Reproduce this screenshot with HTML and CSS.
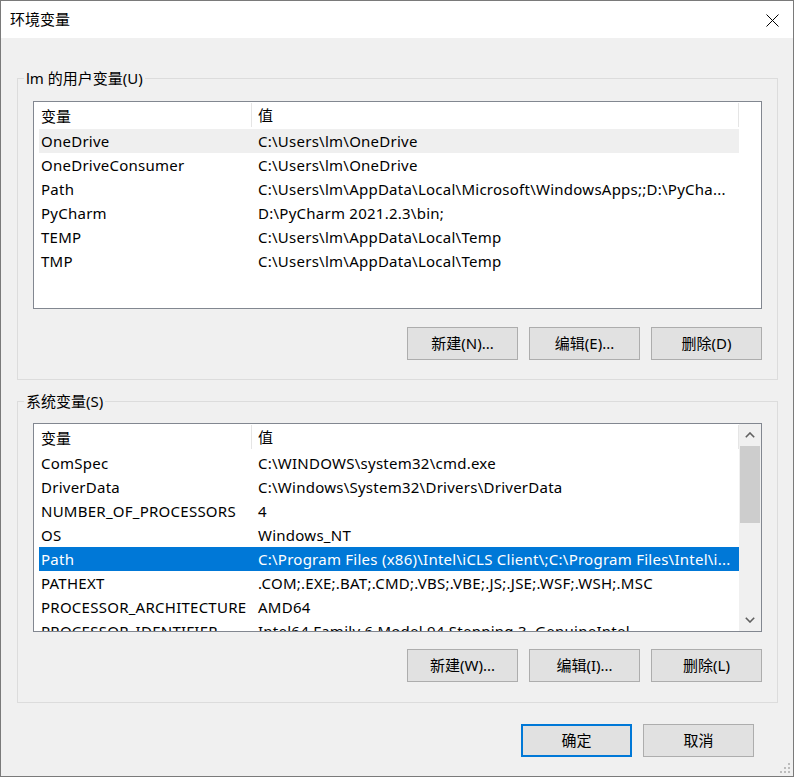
FILE: index.html
```html
<!DOCTYPE html>
<html lang="zh-CN">
<head>
<meta charset="utf-8">
<title>环境变量</title>
<link rel="stylesheet" href="styles.css">
</head>
<body>
<div class="window">
  <div class="titlebar">
    <span class="title">环境变量</span>
    <span class="close">
      <svg width="13" height="13" viewBox="0 0 13 13"><path d="M0.5 0.5 L12.5 12.5 M12.5 0.5 L0.5 12.5" stroke="#000" stroke-width="1" fill="none"/></svg>
    </span>
  </div>
  <div class="content">
    <fieldset class="group g1">
      <legend>lm 的用户变量(U)</legend>
      <div class="list">
        <div class="list-main">
          <div class="row head"><div class="c1">变量</div><div class="c2">值</div></div>
          <div class="row hover"><div class="c1">OneDrive</div><div class="c2">C:\Users\lm\OneDrive</div></div>
          <div class="row"><div class="c1">OneDriveConsumer</div><div class="c2">C:\Users\lm\OneDrive</div></div>
          <div class="row"><div class="c1">Path</div><div class="c2">C:\Users\lm\AppData\Local\Microsoft\WindowsApps;;D:\PyCha...</div></div>
          <div class="row"><div class="c1">PyCharm</div><div class="c2">D:\PyCharm 2021.2.3\bin;</div></div>
          <div class="row"><div class="c1">TEMP</div><div class="c2">C:\Users\lm\AppData\Local\Temp</div></div>
          <div class="row"><div class="c1">TMP</div><div class="c2">C:\Users\lm\AppData\Local\Temp</div></div>
        </div>
      </div>
      <div class="btns">
        <button class="btn">新建(N)...</button>
        <button class="btn">编辑(E)...</button>
        <button class="btn">删除(D)</button>
      </div>
    </fieldset>

    <fieldset class="group g2">
      <legend>系统变量(S)</legend>
      <div class="list list2">
        <div class="list-main">
          <div class="row head"><div class="c1">变量</div><div class="c2">值</div></div>
          <div class="row"><div class="c1">ComSpec</div><div class="c2">C:\WINDOWS\system32\cmd.exe</div></div>
          <div class="row"><div class="c1">DriverData</div><div class="c2">C:\Windows\System32\Drivers\DriverData</div></div>
          <div class="row"><div class="c1">NUMBER_OF_PROCESSORS</div><div class="c2">4</div></div>
          <div class="row"><div class="c1">OS</div><div class="c2">Windows_NT</div></div>
          <div class="row selected"><div class="c1">Path</div><div class="c2">C:\Program Files (x86)\Intel\iCLS Client\;C:\Program Files\Intel\i...</div></div>
          <div class="row"><div class="c1">PATHEXT</div><div class="c2">.COM;.EXE;.BAT;.CMD;.VBS;.VBE;.JS;.JSE;.WSF;.WSH;.MSC</div></div>
          <div class="row"><div class="c1">PROCESSOR_ARCHITECTURE</div><div class="c2">AMD64</div></div>
          <div class="row"><div class="c1">PROCESSOR_IDENTIFIER</div><div class="c2">Intel64 Family 6 Model 94 Stepping 3, GenuineIntel</div></div>
        </div>
        <div class="scrollbar">
          <div class="sb-arrow">
            <svg width="10" height="6" viewBox="0 0 10 6"><path d="M0.8 5.2 L5 1 L9.2 5.2" stroke="#606060" stroke-width="1.6" fill="none"/></svg>
          </div>
          <div class="sb-track">
            <div class="sb-thumb"></div>
          </div>
          <div class="sb-arrow">
            <svg width="10" height="6" viewBox="0 0 10 6"><path d="M0.8 0.8 L5 5 L9.2 0.8" stroke="#606060" stroke-width="1.6" fill="none"/></svg>
          </div>
        </div>
      </div>
      <div class="btns">
        <button class="btn">新建(W)...</button>
        <button class="btn">编辑(I)...</button>
        <button class="btn">删除(L)</button>
      </div>
    </fieldset>

    <div class="footer">
      <button class="btn default">确定</button>
      <button class="btn">取消</button>
    </div>
  </div>
  <svg class="grip" width="12" height="12" viewBox="0 0 12 12">
    <rect x="9" y="1" width="2" height="2" fill="#bcbcbc"/>
    <rect x="5" y="5" width="2" height="2" fill="#bcbcbc"/>
    <rect x="9" y="5" width="2" height="2" fill="#bcbcbc"/>
    <rect x="1" y="9" width="2" height="2" fill="#bcbcbc"/>
    <rect x="5" y="9" width="2" height="2" fill="#bcbcbc"/>
    <rect x="9" y="9" width="2" height="2" fill="#bcbcbc"/>
  </svg>
</div>
</body>
</html>
```

FILE: styles.css
```css
html, body {
  margin: 0;
  padding: 0;
  background: #f0f0f0;
}

body {
  font-family: "Noto Sans", "Noto Sans CJK SC", sans-serif;
  font-size: 15px;
  color: #000;
}

.window {
  position: relative;
  width: 794px;
  height: 777px;
  box-sizing: border-box;
  border: 1px solid #7a7a7a;
  background: #f0f0f0;
  display: flex;
  flex-direction: column;
}

.titlebar {
  height: 37px;
  flex: 0 0 37px;
  background: #fff;
  display: flex;
  align-items: center;
  justify-content: space-between;
  padding-left: 9px;
}

.title {
  line-height: 20px;
  margin-top: -1px;
}

.close {
  width: 42px;
  height: 37px;
  display: flex;
  align-items: center;
  justify-content: center;
  margin-top: 1px;
}

.close svg {
  display: block;
}

.content {
  padding: 30px 15px 0 16px;
  display: flex;
  flex-direction: column;
}

.group {
  margin: 0;
  padding: 12px 15px 19px 15px;
  border: 1px solid #dcdcdc;
  min-width: 0;
}

.g2 {
  margin-top: 11px;
  padding-top: 11px;
  padding-bottom: 20px;
}

.group legend {
  padding: 0 2px;
  margin-left: -9px;
  line-height: 21px;
  height: 21px;
}

.list {
  height: 208px;
  box-sizing: border-box;
  border: 1px solid #828790;
  background: #fff;
  display: flex;
  overflow: hidden;
}

.list2 {
  height: 209px;
}

.list-main {
  flex: 1 1 auto;
  min-width: 0;
  padding-left: 5px;
  overflow: hidden;
}

.row {
  display: grid;
  grid-template-columns: 212px 488px;
  width: 700px;
  height: 24px;
  line-height: 24px;
  white-space: nowrap;
  letter-spacing: 0.25px;
}

.row .c1,
.row .c2 {
  overflow: hidden;
  text-overflow: clip;
}

.row .c1 {
  padding-left: 2px;
}

.row .c2 {
  padding-left: 7px;
}

.row.head {
  height: 27px;
  line-height: 26px;
  letter-spacing: 0;
}

.row.head .c2 {
  padding-left: 6px;
  border-left: 1px solid #e5e5e5;
  border-right: 1px solid #e5e5e5;
  margin: 1px 0 2px 0;
  line-height: 24px;
}

.row.head .c1 {
  line-height: 28px;
}

.row.hover {
  background: #efefef;
}

.row.selected {
  background: #0078d7;
  color: #fff;
}

.scrollbar {
  flex: 0 0 22px;
  width: 22px;
  background: #f0f0f0;
  display: flex;
  flex-direction: column;
}

.sb-arrow {
  height: 22px;
  flex: 0 0 22px;
  display: flex;
  align-items: center;
  justify-content: center;
}

.sb-arrow svg {
  display: block;
}

.sb-track {
  flex: 1 1 auto;
  padding: 0 1px;
}

.sb-thumb {
  height: 77px;
  background: #cdcdcd;
}

.btns {
  display: flex;
  justify-content: flex-end;
  gap: 11px;
  margin-top: 18px;
}

.g2 .btns {
  margin-top: 17px;
}

.btn {
  width: 111px;
  height: 33px;
  box-sizing: border-box;
  border: 1px solid #adadad;
  background: #e1e1e1;
  font-family: "Noto Sans", "Noto Sans CJK SC", sans-serif;
  font-size: 15px;
  color: #000;
  padding: 0 0 2px 0;
  margin: 0;
  line-height: 20px;
}

.btn.default {
  border: 2px solid #0078d7;
}

.footer {
  display: flex;
  justify-content: flex-end;
  gap: 11px;
  margin-top: 21px;
  padding-right: 24px;
}

.grip {
  position: absolute;
  right: 2px;
  bottom: 2px;
  display: block;
}
```
